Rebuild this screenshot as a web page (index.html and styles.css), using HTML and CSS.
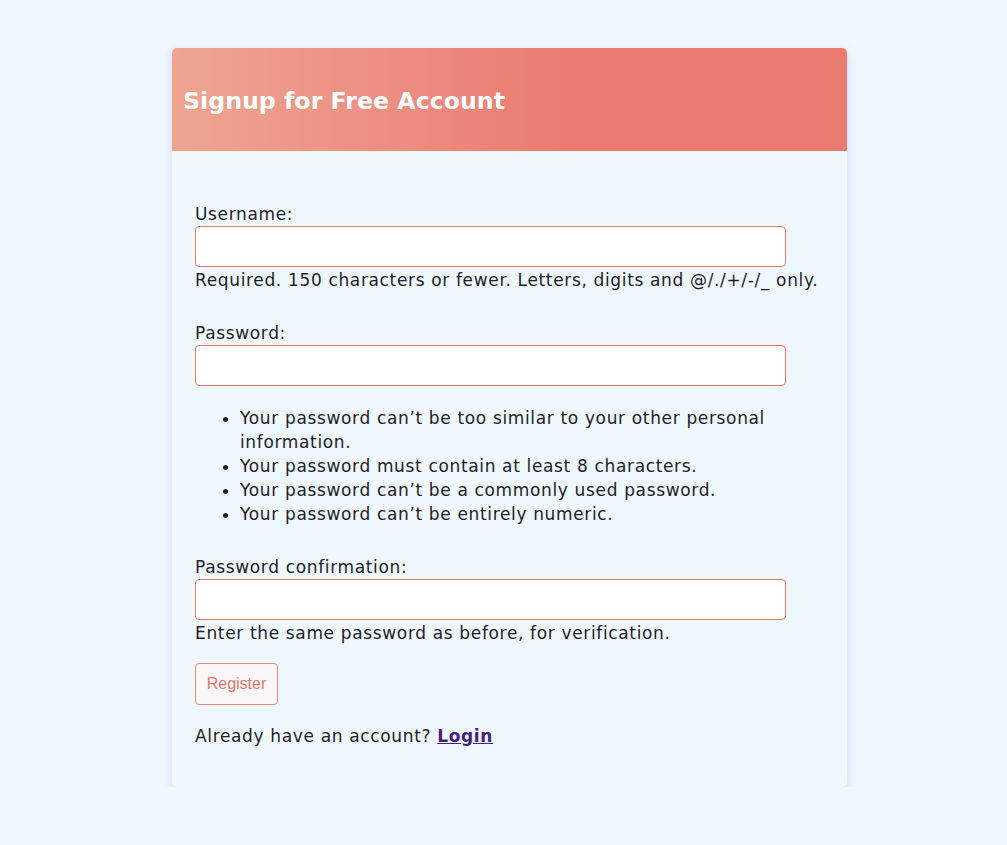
FILE: index.html
```html
<!DOCTYPE html>
<html lang="en">
<head>
<meta charset="utf-8">
<title>Signup</title>
<link rel="stylesheet" href="styles.css">
</head>
<body>
<main class="card">
  <header class="card-head">
    <h1 class="title">Signup for Free Account</h1>
  </header>
  <form class="form">
    <div class="field">
      <label class="label" for="u">Username:</label>
      <input class="input" id="u" type="text">
      <span class="help">Required. 150 characters or fewer. Letters, digits and @/./+/-/_ only.</span>
    </div>
    <div class="field">
      <label class="label" for="p1">Password:</label>
      <input class="input" id="p1" type="password">
      <ul class="rules">
        <li>Your password can’t be too similar to your other personal information.</li>
        <li>Your password must contain at least 8 characters.</li>
        <li>Your password can’t be a commonly used password.</li>
        <li>Your password can’t be entirely numeric.</li>
      </ul>
    </div>
    <div class="field">
      <label class="label" for="p2">Password confirmation:</label>
      <input class="input" id="p2" type="password">
      <span class="help">Enter the same password as before, for verification.</span>
    </div>
    <div class="actions">
      <button class="btn" type="button">Register</button>
    </div>
    <p class="already">Already have an account? <a class="link" href="#">Login</a></p>
  </form>
</main>
</body>
</html>
```
FILE: styles.css
```css
html, body {
  margin: 0;
  padding: 0;
  background: #eff7ff;
}
body {
  font-family: "DejaVu Sans", "Open Sans", sans-serif;
  color: #1d1d2b;
  font-size: 17px;
  letter-spacing: 0.65px;
  line-height: 24px;
  padding-top: 48px;
}
.card {
  width: 675px;
  margin: 0 auto 0 172px;
  background: #eff7ff;
  border-radius: 5px;
  box-shadow: 0 3px 10px rgba(150, 170, 200, 0.35);
  overflow: hidden;
}
.card-head {
  height: 103px;
  display: flex;
  align-items: center;
  padding: 2px 11px 0;
  box-sizing: border-box;
  background: linear-gradient(90deg, #eea592 0%, #ec8f82 30%, #eb7a70 60%, #eb7a70 100%);
}
.title {
  margin: 0;
  color: #fff;
  font-size: 23.7px;
  letter-spacing: 0;
  font-weight: 700;
}
.form {
  display: flex;
  flex-direction: column;
  padding: 51px 23px 39px;
}
.field {
  display: flex;
  flex-direction: column;
  align-items: flex-start;
  margin-bottom: 29px;
}
.field:nth-child(3) {
  margin-bottom: 18px;
}
.label {
  display: block;
}
.input {
  box-sizing: border-box;
  width: 591px;
  height: 41px;
  border: 1px solid #e07a72;
  border-radius: 4px;
  background: #fff;
  margin: 0 0 1px;
}
.help {
  display: block;
}
.rules {
  margin: 19px 0 0;
  padding-left: 45px;
}
.actions {
  display: flex;
}
.btn {
  width: 83px;
  height: 42px;
  border: 1px solid #e58a80;
  border-radius: 4px;
  background: #fbf6f7;
  color: #e0776d;
  font-family: "Liberation Sans", Arial, sans-serif;
  font-size: 16px;
  letter-spacing: 0;
  padding: 0;
}
.already {
  margin: 19px 0 0;
}
.link {
  color: #4a1f7e;
  font-weight: 700;
}
```
